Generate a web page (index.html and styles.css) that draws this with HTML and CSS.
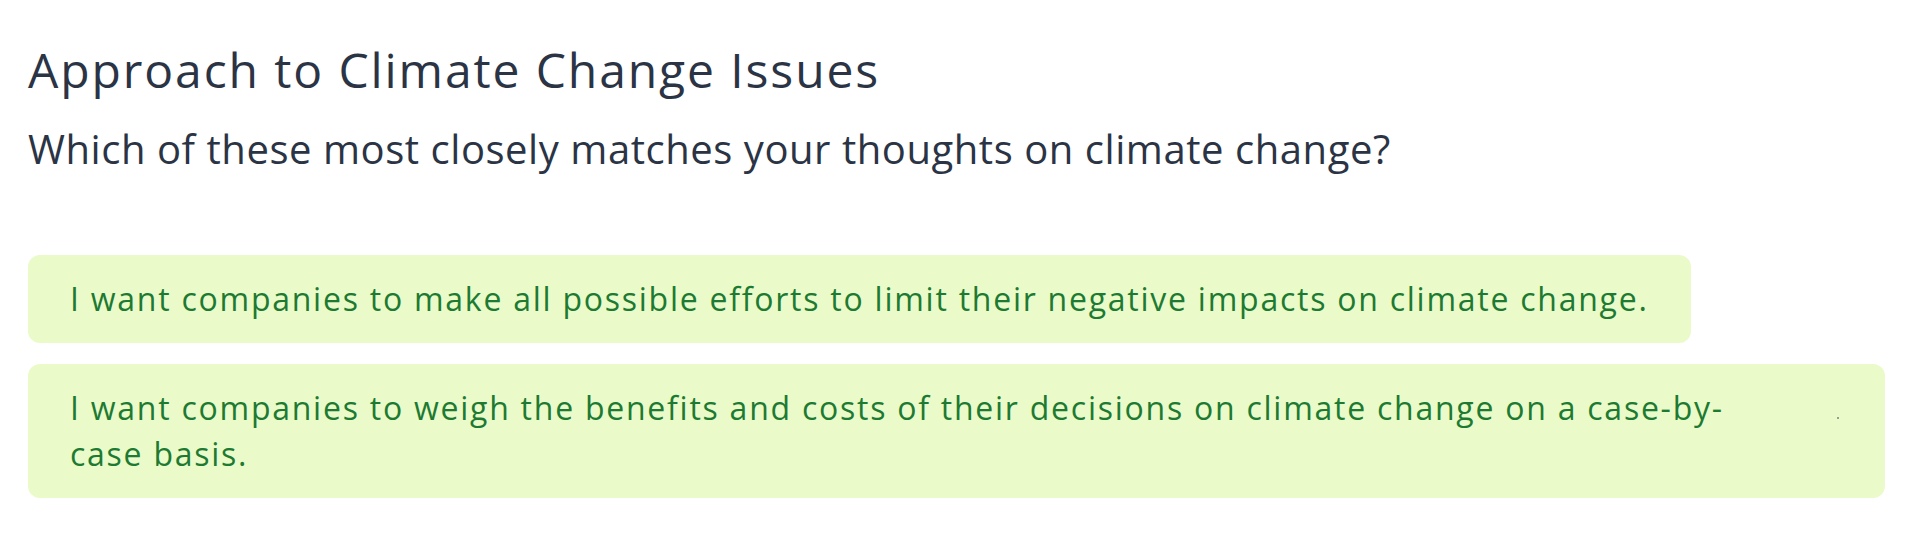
FILE: index.html
```html
<!DOCTYPE html>
<html lang="en">
<head>
<meta charset="utf-8">
<title>Approach to Climate Change Issues</title>
<link rel="stylesheet" href="styles.css">
</head>
<body>
<main class="page">
  <h1 class="title">Approach to Climate Change Issues</h1>
  <p class="question">Which of these most closely matches your thoughts on climate change?</p>
  <div class="options">
    <div class="option">I want companies to make all possible efforts to limit their negative impacts on climate change.</div>
    <div class="option option--marked">I want companies to weigh the benefits and costs of their decisions on climate change on a case-by-case basis.</div>
  </div>
</main>
</body>
</html>
```
FILE: styles.css
```css
* { box-sizing: border-box; }
html, body { margin: 0; padding: 0; background: #ffffff; }
body { font-family: "Open Sans", "Liberation Sans", sans-serif; }
.page {
  padding: 41px 35px 0 28px;
}
.title {
  margin: 0;
  font-size: 48px;
  line-height: 57.6px;
  font-weight: 400;
  letter-spacing: 1.9px;
  color: #2b3445;
}
.question {
  margin: 26px 0 0;
  font-size: 40px;
  line-height: 48px;
  font-weight: 400;
  letter-spacing: 0.55px;
  color: #2b3445;
}
.options {
  margin-top: 82px;
  display: flex;
  flex-direction: column;
  align-items: flex-start;
  gap: 21px;
}
.option {
  position: relative;
  background: #ebfac9;
  color: #1d7a32;
  border-radius: 12px;
  padding: 21px 42px;
  font-size: 32px;
  line-height: 46px;
  letter-spacing: 1.75px;
  max-width: 100%;
}
.option--marked {
  padding-right: 110px;
}
.option--marked::after {
  content: "";
  position: absolute;
  right: 46px;
  top: 53px;
  width: 2px;
  height: 2px;
  background: #8fa58a;
}
```
